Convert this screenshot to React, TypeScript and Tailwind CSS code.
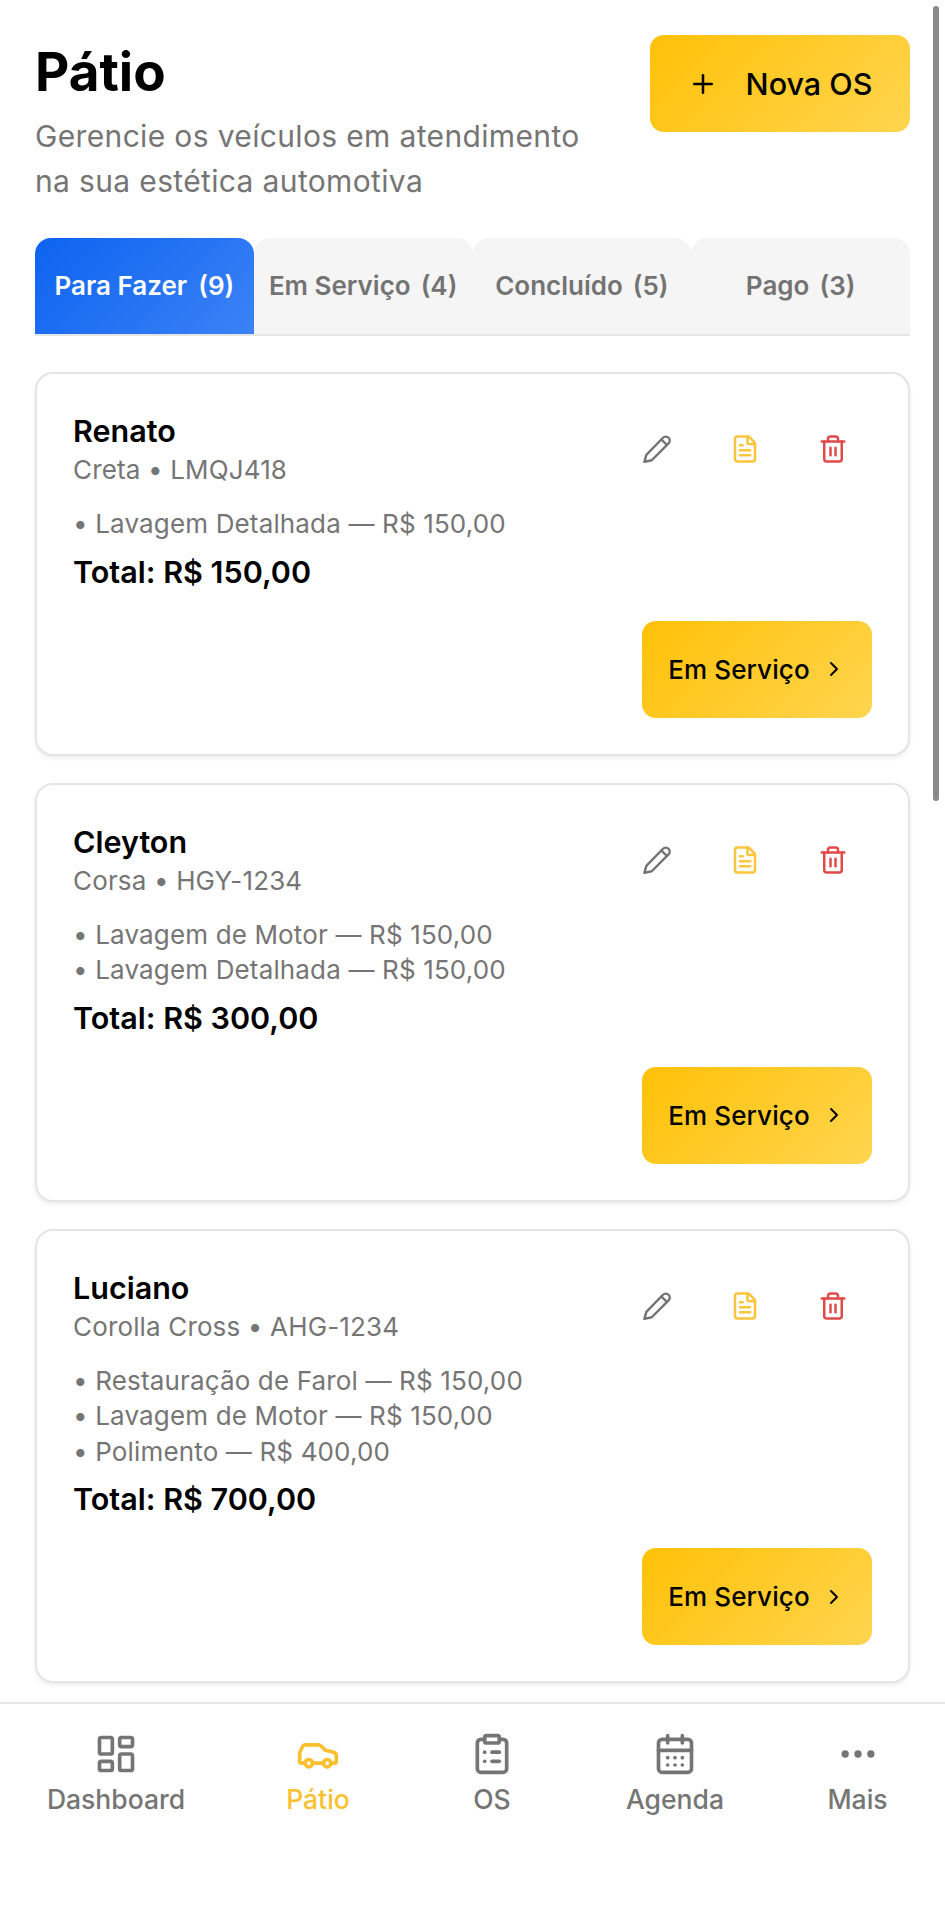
import { FileText, Trash2, Car, ClipboardList, CalendarDays, Ellipsis, LayoutDashboard, ChevronRight, Plus } from "lucide-react";

const orders = [
  { name: "Renato", car: "Creta • LMQJ418", items: ["• Lavagem Detalhada — R$ 150,00"], total: "Total: R$ 150,00" },
  { name: "Cleyton", car: "Corsa • HGY-1234", items: ["• Lavagem de Motor — R$ 150,00", "• Lavagem Detalhada — R$ 150,00"], total: "Total: R$ 300,00" },
  { name: "Luciano", car: "Corolla Cross • AHG-1234", items: ["• Restauração de Farol — R$ 150,00", "• Lavagem de Motor — R$ 150,00", "• Polimento — R$ 400,00"], total: "Total: R$ 700,00" },
];

const tabs = [
  ["Em Serviço", "(4)"],
  ["Concluído", "(5)"],
  ["Pago", "(3)"],
];

const nav = [
  { label: "Dashboard", Icon: LayoutDashboard, active: false },
  { label: "Pátio", Icon: Car, active: true },
  { label: "OS", Icon: ClipboardList, active: false },
  { label: "Agenda", Icon: CalendarDays, active: false },
  { label: "Mais", Icon: Ellipsis, active: false },
];

function SlimPencil() {
  return (
    <svg width="30" height="30" viewBox="2 2 20 20" fill="none" stroke="#737373" strokeWidth="1.6" strokeLinecap="round" strokeLinejoin="round">
      <path d="M3.6 20.6 L4.9 15.9 L16 4.5 a2.6 2.6 0 0 1 3.7 3.7 L8.5 19.5 Z" />
      <path d="M15 5.7 l3.3 3.3" />
    </svg>
  );
}

export default function App() {
  return (
    <div className="relative flex h-[1920px] w-[945px] flex-col overflow-hidden bg-white font-['Inter',sans-serif] text-black">
      <div className="absolute right-[6px] top-[6px] h-[795px] w-[6px] rounded-full bg-[#8a8a8a]" />
      <main className="flex-1 px-[35px] pt-[35px]">
        <header className="flex items-start justify-between">
          <div className="w-[590px]">
            <h1 className="mt-[6px] text-[53px] font-bold leading-[62px]">Pátio</h1>
            <p className="mt-[11px] w-[570px] text-[30px] leading-[45px] tracking-[0.35px] text-[#757575]">Gerencie os veículos em atendimento na sua estética automotiva</p>
          </div>
          <button className="flex h-[97px] w-[260px] items-center justify-center gap-[28px] rounded-[14px] bg-[linear-gradient(135deg,#ffc107,#ffd54f)] text-[30.5px] font-medium">
            <Plus size={30} strokeWidth={2} />
            Nova OS
          </button>
        </header>

        <div className="mt-[34px] grid h-[98px] w-[875px] grid-cols-4 border-b-2 border-[#e5e5e5]">
          <div className="flex items-center justify-center rounded-t-[16px] bg-[linear-gradient(135deg,#0d63f0,#3b82f6)] pb-[2px] text-[26px] font-semibold text-white">
            Para Fazer<span className="ml-[11px]">(9)</span>
          </div>
          {tabs.map(([t, c]) => (
            <div key={t} className="flex items-center justify-center rounded-t-[16px] bg-[#f5f5f5] pb-[2px] text-[26px] font-semibold text-[#737373]">
              {t}<span className="ml-[10px]">{c}</span>
            </div>
          ))}
        </div>

        <div className="mt-[36px] flex flex-col gap-[27px]">
          {orders.map((o) => (
            <section key={o.name} className="rounded-[18px] border-2 border-[#e5e5e5] bg-white px-[36px] pb-[36px] pt-[38px] shadow-[0_2px_4px_rgba(0,0,0,0.08)]">
              <div className="flex items-start justify-between">
                <div>
                  <h2 className="text-[30.5px] font-semibold leading-[38px]">{o.name}</h2>
                  <p className="text-[26px] leading-[40px] tracking-[0.15px] text-[#757575]">{o.car}</p>
                  <ul className="mt-[16px]">
                    {o.items.map((i) => (
                      <li key={i} className="text-[26px] leading-[35.5px] tracking-[0.15px] text-[#757575]">{i}</li>
                    ))}
                  </ul>
                  <p className="mt-[8px] text-[30.5px] font-semibold leading-[44px]">{o.total}</p>
                </div>
                <div className="mr-[24px] mt-[22px] flex gap-[58px]">
                  <SlimPencil />
                  <FileText size={30} strokeWidth={2} className="text-[#fcc43a]" />
                  <Trash2 size={30} strokeWidth={2} className="text-[#e04a4a]" />
                </div>
              </div>
              <div className="mt-[27px] flex justify-end">
                <button className="flex h-[97px] w-[230px] items-center justify-center gap-[12px] rounded-[14px] bg-[linear-gradient(135deg,#ffc107,#ffd54f)] text-[26px] font-medium tracking-[0.1px]">
                  Em Serviço
                  <ChevronRight size={24} strokeWidth={2} />
                </button>
              </div>
            </section>
          ))}
        </div>
      </main>
      <nav className="grid h-[218px] grid-cols-[232px_172px_176px_190px_175px] border-t-2 border-[#e5e5e5] pt-[28px]">
        {nav.map(({ label, Icon, active }) => (
          <div key={label} className={`flex flex-col items-center ${active ? "text-[#fbc02d]" : "text-[#757575]"}`}>
            <Icon size={44} strokeWidth={2} />
            <span className="mt-[5px] text-[26.5px] font-medium leading-[36px]">{label}</span>
          </div>
        ))}
      </nav>
    </div>
  );
}
